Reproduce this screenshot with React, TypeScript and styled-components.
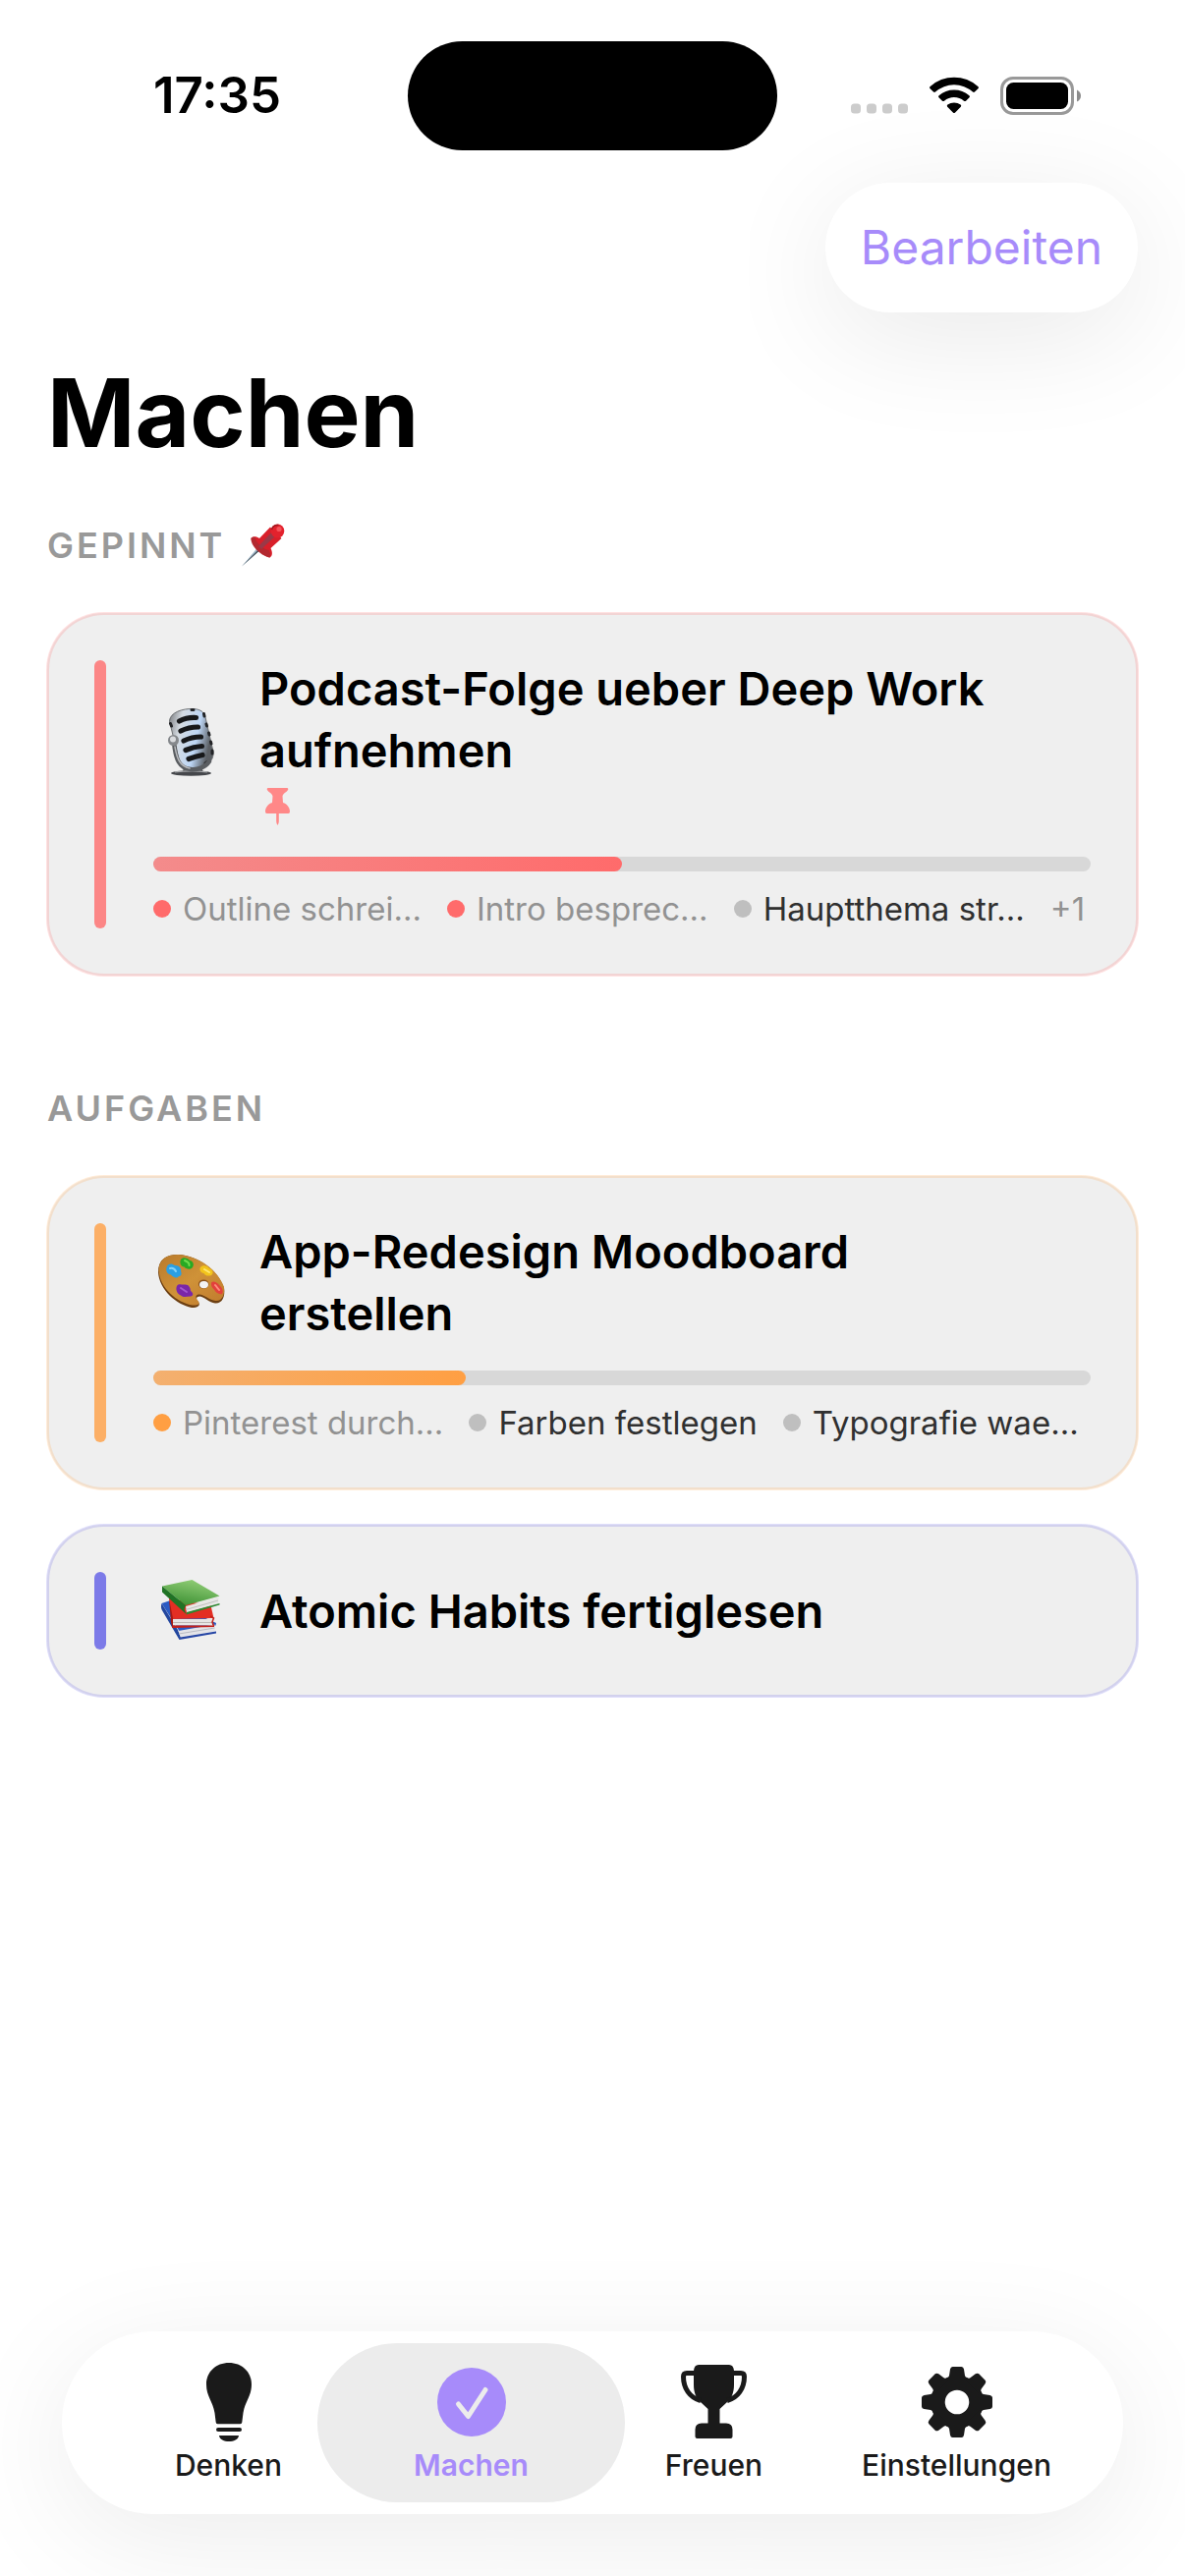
import React from "react";
import styled, { createGlobalStyle } from "styled-components";

const GlobalStyle = createGlobalStyle`
  *, *::before, *::after { box-sizing: border-box; }
  body {
    margin: 0;
    background: #ffffff;
    color: #000000;
    font-family: Inter, "Liberation Sans", sans-serif;
  }
  h1, h2, h3, ul { margin: 0; padding: 0; }
  ul { list-style: none; }
`;

const Page = styled.div`
  display: flex;
  flex-direction: column;
  min-height: 100vh;
`;

/* ---------- status bar ---------- */

const StatusBar = styled.div`
  display: grid;
  grid-template-columns: 1fr auto 1fr;
  align-items: center;
  height: 186px;
  padding-top: 8px;
`;

const Clock = styled.time`
  padding-left: 156px;
  font-size: 51px;
  line-height: 60px;
  font-weight: 600;
`;

const Island = styled.div`
  width: 376px;
  height: 111px;
  border-radius: 56px;
  background: #000000;
`;

const StatusIcons = styled.div`
  display: flex;
  align-items: center;
  justify-content: flex-end;
  gap: 22px;
  padding-right: 106px;
`;

/* ---------- header ---------- */

const Toolbar = styled.div`
  display: flex;
  justify-content: flex-end;
  padding: 0 48px;
`;

const EditButton = styled.button`
  height: 132px;
  padding: 0 36px;
  border: 0;
  border-radius: 66px;
  background: #ffffff;
  box-shadow: 0 24px 120px rgba(0, 0, 0, 0.09);
  color: #a78bfa;
  font-family: inherit;
  font-size: 48px;
  line-height: 60px;
`;

const Content = styled.main`
  flex: 1;
  padding: 42px 48px 48px;
`;

const Title = styled.h1`
  font-size: 96px;
  line-height: 120px;
  font-weight: 700;
`;

/* ---------- sections and cards ---------- */

const Section = styled.section`
  margin-top: 51px;

  & + & {
    margin-top: 111px;
  }
`;

const SectionLabel = styled.h2`
  display: flex;
  align-items: center;
  gap: 17px;
  margin-bottom: 45px;
  color: #999999;
  font-size: 36px;
  line-height: 48px;
  font-weight: 600;
  letter-spacing: 3px;
  text-transform: uppercase;
`;

const CardList = styled.div`
  display: grid;
  gap: 36px;
`;

const Card = styled.article<{ $rgb: string }>`
  display: flex;
  gap: 48px;
  padding: 46px;
  border: 2px solid rgba(${(p) => p.$rgb}, 0.2);
  border-radius: 58px;
  background: #efefef;
  box-shadow: 0 0 0 1px rgba(${(p) => p.$rgb}, 0.2);
`;

const Accent = styled.div<{ $rgb: string }>`
  flex: none;
  width: 12px;
  border-radius: 6px;
  background: rgba(${(p) => p.$rgb}, 0.8);
`;

const CardBody = styled.div`
  flex: 1;
  min-width: 0;
`;

const CardHeader = styled.div`
  display: flex;
  align-items: center;
  gap: 30px;
  min-height: 79px;
`;

const CardText = styled.div`
  flex: 1;
  padding-right: 60px;
`;

const CardTitle = styled.h3`
  margin: -3px 0;
  font-size: 47px;
  line-height: 63px;
  font-weight: 600;
`;

const PinRow = styled.div`
  display: flex;
  align-items: flex-end;
  height: 50px;
  padding: 0 0 2px 6px;
`;

const Track = styled.div`
  height: 15px;
  margin: 30px 0 18px;
  border-radius: 8px;
  background: #d8d8d8;
`;

const Fill = styled.div<{ $rgb: string }>`
  height: 100%;
  border-radius: 8px;
  background: linear-gradient(90deg, rgba(${(p) => p.$rgb}, 0.7), rgb(${(p) => p.$rgb}));
`;

const Steps = styled.ul`
  display: flex;
  gap: 26px;
  font-size: 33px;
  line-height: 40px;
  white-space: nowrap;
`;

const Step = styled.li<{ $done: boolean }>`
  display: flex;
  align-items: center;
  gap: 12px;
  color: ${(p) => (p.$done ? "#929292" : "#303030")};
`;

const Dot = styled.span<{ $color: string }>`
  width: 18px;
  height: 18px;
  border-radius: 50%;
  background: ${(p) => p.$color};
`;

const More = styled.li`
  color: #929292;
`;

/* ---------- tab bar ---------- */

const TabBar = styled.nav`
  display: grid;
  grid-template-columns: repeat(4, minmax(0, 1fr));
  height: 186px;
  margin: 0 63px 63px;
  padding: 12px 46px;
  border-radius: 93px;
  background: #ffffff;
  box-shadow: 0 24px 120px rgba(0, 0, 0, 0.08);
`;

const Tab = styled.a<{ $active?: boolean }>`
  display: flex;
  flex-direction: column;
  align-items: center;
  margin: 0 -33px;
  padding-top: 17px;
  border-radius: 81px;
  background: ${(p) => (p.$active ? "#ececec" : "transparent")};
  color: ${(p) => (p.$active ? "#a78bfa" : "#1a1a1a")};
  font-size: 30px;
  line-height: 36px;
  font-weight: ${(p) => (p.$active ? 600 : 500)};
  text-decoration: none;
`;

const TabIcon = styled.span`
  display: flex;
  align-items: center;
  justify-content: center;
  height: 85px;
  margin-bottom: 4px;
`;

/* ---------- drawings ---------- */

const Signal = () => (
  <svg width="58" height="38" viewBox="0 0 58 38" fill="#cccccc" aria-hidden="true">
    {[0, 16, 32, 48].map((x) => (
      <rect key={x} x={x} y="27.5" width="10" height="10" rx="3.5" />
    ))}
  </svg>
);

const Wifi = () => (
  <svg width="50" height="38" viewBox="0 0 50 37" aria-hidden="true">
    <path d="M.6 11.8Q-.5 10.6.7 9.6A36 36 0 0 1 49.3 9.6Q50.5 10.6 49.4 11.8L46 15.1Q45 16 44 15.1A28.5 28.5 0 0 0 6 15.1Q5 16 4 15.1Z" />
    <path d="M9.5 20.8Q8.4 19.7 9.6 18.7A23.3 23.3 0 0 1 40.4 18.7Q41.6 19.7 40.5 20.8L37 24.2Q36 25 35 24.2A15.6 15.6 0 0 0 15 24.2Q14 25 13 24.2Z" />
    <path d="M18.2 30.2Q17.2 29 18.4 28.1A11 11 0 0 1 31.6 28.1Q32.8 29 31.8 30.2L25.9 36.2Q25 37 24.1 36.2Z" />
  </svg>
);

const Battery = () => (
  <svg width="82" height="39" viewBox="0 0 82 39" aria-hidden="true">
    <rect x="1.5" y="1.5" width="72" height="36" rx="11.5" fill="none" stroke="#999999" strokeWidth="3" />
    <rect x="6" y="6" width="63" height="27" rx="7.5" />
    <path d="M78 13.5Q82 15.5 82 19.5T78 25.5Z" fill="#8c8c8c" />
  </svg>
);

const PushpinEmoji = () => (
  <svg width="44" height="44" viewBox="0 0 44 44" aria-label="Pinnnadel" role="img">
    <path d="M0 43.5 17 23.5 19.5 26Z" fill="#9fb6c6" />
    <path d="M0 43.5 18.5 25 19.5 26.2Z" fill="#3f4a54" />
    <path d="M9.5 15C11 12.5 15 12.5 18 15L29 3.5 40.5 15 29.5 25C31.5 29 31.5 33 28.5 34.5 24 34.5 10 22.5 9.5 15Z" fill="#d81f2a" />
    <path d="M9.5 15C9 22 18 32 28.5 34.5 29.5 32 29 29 27.5 27 22 26 15 20 13.5 14 11.5 13.5 10 14 9.5 15Z" fill="#b3282f" />
    <path d="M17 23 32 7 36 11 20 26Z" fill="#9a3947" />
    <ellipse cx="36.5" cy="7.5" rx="6.8" ry="7" fill="#e3222d" />
    <path d="M30.5 6Q32 1 37.5 1.5" fill="none" stroke="#a11820" strokeWidth="1.5" />
    <circle cx="38" cy="5.5" r="2.6" fill="#f4535a" />
  </svg>
);

const MicEmoji = () => (
  <svg width="78" height="78" viewBox="0 0 78 78" aria-label="Mikrofon" role="img">
    <defs>
      <linearGradient id="micHead" x1="0" x2="1" y1="0" y2="0.3">
        <stop offset="0" stopColor="#77797c" />
        <stop offset="0.3" stopColor="#d5dbe2" />
        <stop offset="0.7" stopColor="#bdd6f5" />
        <stop offset="1" stopColor="#5b5f64" />
      </linearGradient>
      <linearGradient id="micStem" x1="0" x2="1" y1="0" y2="0">
        <stop offset="0" stopColor="#3c3d3f" />
        <stop offset="0.5" stopColor="#b3b3b3" />
        <stop offset="1" stopColor="#36373a" />
      </linearGradient>
    </defs>
    <path d="M32 62H49L51 69H29Z" fill="url(#micStem)" />
    <ellipse cx="38.5" cy="69" rx="20.5" ry="2.8" fill="#45474b" />
    <path d="M22 67.8Q38 66 55 67.8" fill="none" stroke="#a6a8ab" strokeWidth="1.2" />
    <path d="M16.5 16C17 7 30 3 41 3.5 48 4 52 7 53 12L61 47C62 55 56 62 46 63.5 37 65 28 62 26 55Z" fill="url(#micHead)" stroke="#6d7073" />
    <g stroke="#17181a" strokeWidth="5.2" strokeLinecap="round" fill="none">
      <path d="M26.5 16Q34 12 43.5 12.5" />
      <path d="M28 26Q36 22 45.5 22" />
      <path d="M31 36Q39 32 48.5 32" />
      <path d="M33 45.5Q41 42 49.5 41.5" />
      <path d="M36 54.5Q43 52 50 50.5" />
    </g>
    <g stroke="#222326" strokeWidth="3" strokeLinecap="round">
      <path d="M51.5 8.5 52 11M54 19 54.5 21M56.5 28 57 30M58.5 37 59 39M60 46 60 49M53 59 55 57.5M17.5 18.5 18.5 21M39 4.5H41" />
    </g>
    <path d="M21.5 41C23 54 26 64 38 65 45 66 53 63 57 57" fill="none" stroke="#5a5d61" strokeWidth="4.5" strokeLinecap="round" />
    <path d="M22 42C24 54 27 62 37 64" fill="none" stroke="#b7b9bc" strokeWidth="1.5" strokeLinecap="round" />
    <circle cx="20.5" cy="35.5" r="5.5" fill="#85888c" />
    <circle cx="20" cy="34.5" r="3" fill="#d9dbde" />
  </svg>
);

const PaletteEmoji = () => (
  <svg width="78" height="78" viewBox="0 0 78 78" aria-label="Farbpalette" role="img">
    <defs>
      <linearGradient id="wood" x1="0" x2="1" y1="0" y2="1">
        <stop offset="0" stopColor="#b97a2b" />
        <stop offset="0.5" stopColor="#cf9238" />
        <stop offset="1" stopColor="#c07a2d" />
      </linearGradient>
    </defs>
    <path
      d="M5 29C5 16 13 11 25 11 46 12 66 27 72 45 73.5 54 70 61 63 60.5 57 60 52 54 47.5 53.5 43 53.5 43.5 57 46 59.5 48.5 63 45 65 39 65 24 62 6 47 5 29Z"
      fill="#6c3f12"
    />
    <path d="M5.5 27C6 15 14 11 25 11 46 12 66 27 72 44 73 52 70 58.5 63.5 58 57 57.5 52 51.5 46.5 51.5 42 52 43 55.5 46 58.5 48 61.5 45 63 40 62.5 24 60 6.5 45 5.5 27Z" fill="url(#wood)" />
    <ellipse cx="51.2" cy="41" rx="5.3" ry="4.5" fill="#8a521b" />
    <ellipse cx="51.5" cy="41.6" rx="4.5" ry="3.6" fill="#f3f3f3" />
    <path d="M14 23C15 20 19 19.5 22 22 26 21.5 29 25 28 28 29.5 31 28 33 26 33 24 36 20 34 18 31.5 14 31 12 27 14 23Z" fill="#2c9fe2" />
    <path d="M17 25Q21 24 23 28" fill="none" stroke="#83d2fa" strokeWidth="2" strokeLinecap="round" />
    <path d="M28 16C30 13 35 14.5 37 17 41 17.5 42 22 39.5 24.5 37 27 33 25.5 31.5 23.5 28 23.5 26.5 19 28 16Z" fill="#28a923" />
    <path d="M32 17Q37 19 36.5 22" fill="none" stroke="#70dc4d" strokeWidth="2" strokeLinecap="round" />
    <path d="M48 24C50 21 55 22 57 25 60.5 26 62 30 59 32 56 33.5 52 32 51.5 30 48 29.5 46.5 26 48 24Z" fill="#f2c41c" />
    <path d="M52 26 57 29" stroke="#ffe873" strokeWidth="2" strokeLinecap="round" />
    <path d="M59.5 39C61 37.5 65 39 67 42 70 44 72 49 70 51 67 52 63 49 62 46.5 59.5 44.5 58 41 59.5 39Z" fill="#e2423c" />
    <path d="M63 42 67 47" stroke="#ff8b7c" strokeWidth="2" strokeLinecap="round" />
    <path d="M24 43C26 40 29 42 32 41.5 36 41 38 45 38 48 41 50 41 53 38 53.5 34 53.5 31 55 28 52.5 24 51 22.5 46 24 43Z" fill="#7a27a8" />
    <path d="M28 45 34 49" stroke="#a358cf" strokeWidth="2" strokeLinecap="round" />
  </svg>
);

const BooksEmoji = () => (
  <svg width="78" height="78" viewBox="0 0 78 78" aria-label="Bücher" role="img">
    <defs>
      <linearGradient id="greenCover" x1="0.7" x2="0.3" y1="0" y2="1">
        <stop offset="0" stopColor="#93cf78" />
        <stop offset="1" stopColor="#3d9134" />
      </linearGradient>
    </defs>
    <path d="M8.5 31 16 28.5 64 51 63.5 53.5 27 60Z" fill="#2b5bc4" />
    <path d="M8.5 31C7.5 34 8 37 9.5 39L26.5 68 28 66 25 58Z" fill="#23479f" />
    <path d="M25.5 59 62.5 52.5V59.5L28 65.5Z" fill="#e4e4e8" />
    <path d="M26 62 62.5 56" stroke="#b9bbc4" />
    <path d="M26.5 68 64 61.5V59.5L27.5 65.5Z" fill="#2646a5" />
    <path d="M16 26 58.5 33 61.5 46 19 47Z" fill="#e32e23" />
    <path d="M16 26 18 50 19.5 56 21.5 55 20 46Z" fill="#a91912" />
    <path d="M20 47H60V53.5H20Z" fill="#e7e5e4" />
    <path d="M20 50.5H60" stroke="#bcb8b6" />
    <path d="M19 56 62 55V53.5L20 53.5Z" fill="#c4211a" />
    <path d="M58 44 61.5 46 60 50 61.5 54" fill="none" stroke="#c4211a" strokeWidth="1.5" />
    <path d="M9 13.5 39.5 7 67.5 23.5 33 33Z" fill="url(#greenCover)" />
    <path d="M9 13.5 33 33 31.5 37 33.5 42 9 19.5Z" fill="#207325" />
    <path d="M33 34 66.5 24.5 66 31.5 34 40.5Z" fill="#e8e8e6" />
    <path d="M33 37.5 66 28" stroke="#bfc0bd" />
    <path d="M33.5 42.5 67.5 32.5V31L34 40Z" fill="#2c8630" />
  </svg>
);

const PinGlyph = () => (
  <svg width="25" height="38" viewBox="0 0 25 38" fill="#ff8888" aria-label="Gepinnt" role="img">
    <path d="M3 0H22Q23.3 0 23.3 1.2C23.3 3.5 18 5 17.5 8.5L18 15C22 16 25 20 25 24Q25 26 23.5 26H1.5Q0 26 0 24C0 20 3 16 7 15L7.5 8.5C7 5 1.7 3.5 1.7 1.2Q1.7 0 3 0Z" />
    <path d="M11.2 25H13.8V34Q13.8 36 12.5 38 11.2 36 11.2 34Z" />
  </svg>
);

const BulbIcon = () => (
  <svg width="46" height="80" viewBox="0 0 46 80" fill="currentColor" aria-hidden="true">
    <path d="M23 0C36 0 46 9 46 22 46 34 39.5 39 37.5 51L36.3 60.5Q36.2 62.3 34.5 62.3H11.5Q9.8 62.3 9.7 60.5L8.5 51C6.5 39 0 34 0 22 0 9 10 0 23 0Z" />
    <rect x="10" y="66" width="26" height="4" rx="2" />
    <path d="M13 74H33C32.5 78 28 80 23 80S13.5 78 13 74Z" />
  </svg>
);

const CheckIcon = () => (
  <svg width="70" height="70" viewBox="0 0 70 70" aria-hidden="true">
    <circle cx="35" cy="35" r="35" fill="currentColor" />
    <path d="M21.5 37 31.5 49.5 49 22.5" fill="none" stroke="#ececec" strokeWidth="5" strokeLinecap="round" strokeLinejoin="round" />
  </svg>
);

const TrophyIcon = () => (
  <svg width="67" height="75" viewBox="0 0 67 75" fill="currentColor" aria-hidden="true">
    <path d="M18 0H49Q53.5 0 54 6V20C54 29 51.5 34 46.5 38.5L39.5 45V59.5H46Q52.5 59.5 52.5 66V73Q52.5 75 50.5 75H16.5Q14.5 75 14.5 73V66Q14.5 59.5 21 59.5H27.5V45L20.5 38.5C15.5 34 13 29 13 20V6Q13.5 0 18 0Z" />
    <path d="M14 8.5H6Q2.5 8.5 2.5 12C2.5 24 9 33.5 20 36.5M53 8.5H61Q64.5 8.5 64.5 12C64.5 24 58 33.5 47 36.5" fill="none" stroke="currentColor" strokeWidth="5" />
  </svg>
);

const GearIcon = () => (
  <svg width="72" height="72" viewBox="-36 -36 72 72" fill="currentColor" aria-hidden="true">
    <circle r="19.6" fill="none" stroke="currentColor" strokeWidth="14.6" />
    {[0, 45, 90, 135, 180, 225, 270, 315].map((angle) => (
      <path key={angle} transform={`rotate(${angle})`} d="M-12-22Q-8.5-24-8-27L-7-33.5Q-6.5-36-4.5-36H4.5Q6.5-36 7-33.5L8-27Q8.5-24 12-22Z" />
    ))}
  </svg>
);

/* ---------- data ---------- */

type TaskStep = { text: string; done: boolean };

type Task = {
  title: string;
  rgb: string;
  emoji: React.ReactNode;
  pinned?: boolean;
  progress?: number;
  steps?: TaskStep[];
  more?: number;
};

const pinnedTasks: Task[] = [
  {
    title: "Podcast-Folge ueber Deep Work aufnehmen",
    rgb: "255, 107, 107",
    emoji: <MicEmoji />,
    pinned: true,
    progress: 1 / 2,
    steps: [
      { text: "Outline schrei…", done: true },
      { text: "Intro besprec…", done: true },
      { text: "Hauptthema str…", done: false },
    ],
    more: 1,
  },
];

const openTasks: Task[] = [
  {
    title: "App-Redesign Moodboard erstellen",
    rgb: "255, 159, 67",
    emoji: <PaletteEmoji />,
    progress: 1 / 3,
    steps: [
      { text: "Pinterest durch…", done: true },
      { text: "Farben festlegen", done: false },
      { text: "Typografie wae…", done: false },
    ],
  },
  {
    title: "Atomic Habits fertiglesen",
    rgb: "95, 92, 230",
    emoji: <BooksEmoji />,
  },
];

const TaskCard = ({ task }: { task: Task }) => (
  <Card $rgb={task.rgb}>
    <Accent $rgb={task.rgb} />
    <CardBody>
      <CardHeader>
        {task.emoji}
        <CardText>
          <CardTitle>{task.title}</CardTitle>
          {task.pinned && (
            <PinRow>
              <PinGlyph />
            </PinRow>
          )}
        </CardText>
      </CardHeader>
      {task.progress !== undefined && (
        <Track
          role="progressbar"
          aria-label={task.title}
          aria-valuemin={0}
          aria-valuemax={100}
          aria-valuenow={Math.round(task.progress * 100)}
        >
          <Fill $rgb={task.rgb} style={{ width: `${task.progress * 100}%` }} />
        </Track>
      )}
      {task.steps && (
        <Steps>
          {task.steps.map((step) => (
            <Step key={step.text} $done={step.done}>
              <Dot $color={step.done ? `rgb(${task.rgb})` : "#bfbfbf"} />
              {step.text}
            </Step>
          ))}
          {task.more && <More>+{task.more}</More>}
        </Steps>
      )}
    </CardBody>
  </Card>
);

export default function App() {
  return (
    <Page>
      <GlobalStyle />
      <StatusBar>
        <Clock>17:35</Clock>
        <Island />
        <StatusIcons>
          <Signal />
          <Wifi />
          <Battery />
        </StatusIcons>
      </StatusBar>

      <Toolbar>
        <EditButton type="button">Bearbeiten</EditButton>
      </Toolbar>

      <Content>
        <Title>Machen</Title>
        <Section>
          <SectionLabel>
            Gepinnt <PushpinEmoji />
          </SectionLabel>
          <CardList>
            {pinnedTasks.map((task) => (
              <TaskCard key={task.title} task={task} />
            ))}
          </CardList>
        </Section>
        <Section>
          <SectionLabel>Aufgaben</SectionLabel>
          <CardList>
            {openTasks.map((task) => (
              <TaskCard key={task.title} task={task} />
            ))}
          </CardList>
        </Section>
      </Content>

      <TabBar aria-label="Hauptnavigation">
        <Tab href="#denken">
          <TabIcon>
            <BulbIcon />
          </TabIcon>
          Denken
        </Tab>
        <Tab href="#machen" $active aria-current="page">
          <TabIcon>
            <CheckIcon />
          </TabIcon>
          Machen
        </Tab>
        <Tab href="#freuen">
          <TabIcon>
            <TrophyIcon />
          </TabIcon>
          Freuen
        </Tab>
        <Tab href="#einstellungen">
          <TabIcon>
            <GearIcon />
          </TabIcon>
          Einstellungen
        </Tab>
      </TabBar>
    </Page>
  );
}
